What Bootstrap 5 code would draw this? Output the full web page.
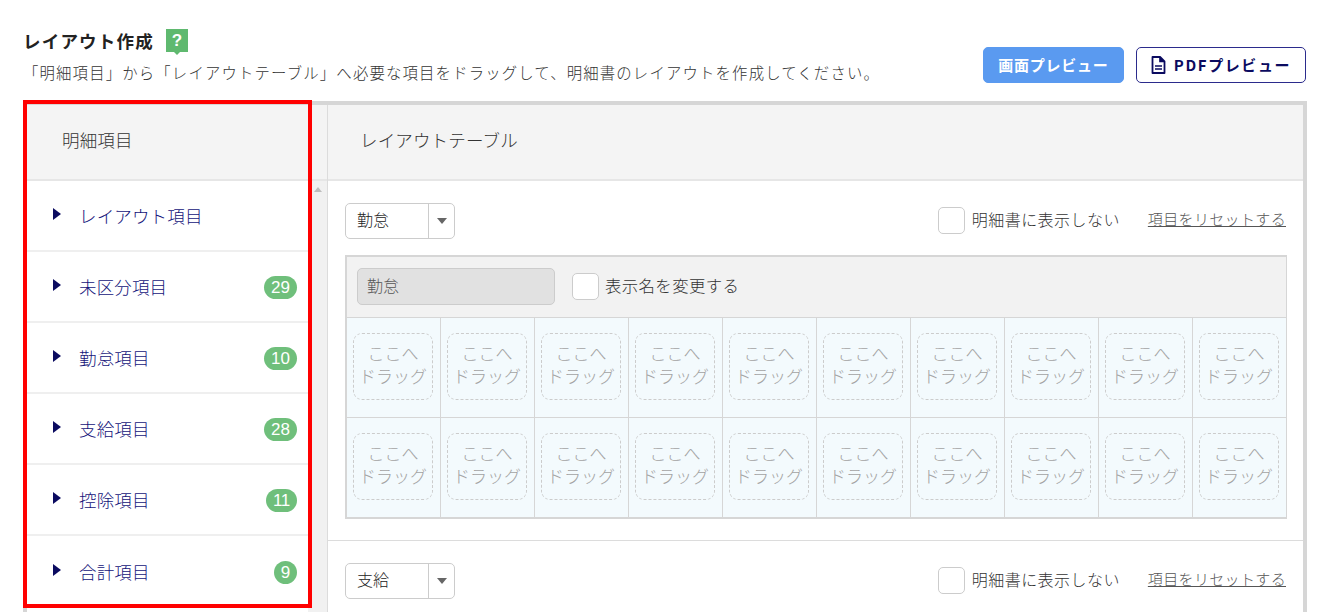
<!DOCTYPE html>
<html lang="ja">
<head>
<meta charset="utf-8">
<title>レイアウト作成</title>
<link rel="stylesheet" href="https://cdn.jsdelivr.net/npm/bootstrap@5.3.0/dist/css/bootstrap.min.css">
<style>
html,body{height:612px;overflow:hidden;background:#fff}
body{font-family:"Noto Sans CJK JP","Liberation Sans",sans-serif;color:#333;font-size:16px;font-weight:300;line-height:1.5;position:relative}
.pg-head{height:101px;padding:29px 24px 0 23px}
.pg-title{font-size:17.5px;font-weight:700;color:#222;letter-spacing:1.2px;line-height:23px;margin:0}
.help-tag{width:22px;height:23px;background:#5fb96f;color:#fff;font:700 17px/23px "Liberation Sans",sans-serif;text-align:center;position:relative;margin-left:12px;display:block}
.help-tag::after{content:"";position:absolute;left:8px;bottom:-3px;border:3px solid transparent;border-top-color:#5fb96f;border-bottom:0}
.pg-desc{font-size:15.4px;letter-spacing:1.15px;line-height:22px;margin:0;color:#333;white-space:nowrap;padding-top:9px}
.btn-prev{height:36px;border-radius:5px;font-size:15px;font-weight:700;letter-spacing:.75px;padding:0;display:flex;align-items:center;justify-content:center;white-space:nowrap}
.btn-img{width:141px;background:#5a9af0;border:1px solid #5a9af0;color:#fff}
.btn-pdf{width:170px;background:#fff;border:1px solid #2b2b8c;color:#0b0b60;gap:8px;margin-left:12px;letter-spacing:1.6px}
.frame{margin-left:23px;width:1284px;height:520px;border:4px solid #d6d6d6;border-bottom:0;display:flex;overflow:hidden}
.side{width:281px;flex:none}
.gutter{width:20px;flex:none;background:#f1f1f1;border-right:1px solid #dcdcdc;position:relative}
.gutter::after{content:"";position:absolute;left:6px;top:82px;border:4px solid transparent;border-bottom:5px solid #bdbdbd;border-top:0}
.main{flex:1;min-width:0}
.pane-h{height:76px;background:#f4f4f4;border-bottom:2px solid #e6e6e6;display:flex;align-items:center;font-size:17.5px;letter-spacing:.15px;padding-bottom:4px;color:#333}
.side .pane-h{padding-left:35px}
.main .pane-h{padding-left:32px}
.gutter-h{height:76px;background:#f4f4f4;border-bottom:2px solid #e6e6e6}
.side-item{height:71px;border-bottom:2px solid #efefef;display:flex;align-items:center;padding:1px 11px 0 26px;color:#14147a;font-size:17.5px;letter-spacing:.15px}
.side-item:last-child{border-bottom:0}
.tri{width:0;height:0;border-left:8px solid #0b0b60;border-top:6.5px solid transparent;border-bottom:6.5px solid transparent;margin-right:18px;position:relative;top:-2px}
.cnt{margin-left:auto;background:#6fbf7b;color:#fff;font:400 17px/23px "Liberation Sans",sans-serif;height:23px;min-width:23px;padding:0 7px;border-radius:12px;text-align:center;letter-spacing:0}
.cnt.one{padding:0}
.cnt.ones{letter-spacing:-.3px;padding:0 7px 0 7px}
.sect{padding:22px 17px 0 17px}
.sect-b{height:360px;border-bottom:1px solid #dcdcdc}
.sel{width:110px;height:36px;border:1px solid #ccc;border-radius:5px;display:flex;color:#222;font-size:16px;background:#fff}
.sel-v{flex:1;padding-left:11px;line-height:31px;border-right:1px solid #ccc}
.sel-c{width:25px;display:flex;align-items:center;justify-content:center}
.sel-c::after{content:"";border:5px solid transparent;border-top:6px solid #666;border-bottom:0}
.chk{width:27px;height:27px;border:1px solid #ccc;border-radius:5px;background:#fff;flex:none;display:block}
.opt-row{margin-top:-2px}
.opt-t{font-size:16px;letter-spacing:.45px;margin-left:7px;white-space:nowrap;position:relative;top:-1px}
.opt-l{font-size:16.4px;letter-spacing:.4px;margin-left:6px;top:-1px}
.reset{font-size:15px;letter-spacing:.35px;color:#555;text-decoration:underline;margin-left:28px;white-space:nowrap;position:relative;top:-1px}
.tbl{margin-top:16px;width:942px;border:2px solid #d6d6d6;border-right-width:1px}
.tbl-h{height:60px;background:#f2f2f2;padding:0 10px 1px;gap:17px;display:flex;align-items:center}
.name-in{width:198px;height:37px;background:#e1e1e1;border:1px solid #ccc;border-radius:5px;padding-left:9px;line-height:33px;font-size:16px;color:#555}
.tbl-grid{display:grid;grid-template-columns:93px repeat(9,94px);background:#f3fafd}
.cellx{height:100px;border-top:1px solid #d6d6d6;border-left:1px solid #d6d6d6;padding:15px 7px 0 6px;background:#f3fafd}
.cellx:nth-child(10n+1){border-left:0}
.drop{height:67px;border:1px dashed #ccc;border-radius:9px;font-size:17px;line-height:23px;color:#a3a3a3;text-align:center;padding-top:7px;white-space:nowrap}
.redbox{position:absolute;left:23px;top:100px;width:289px;height:508px;border:4px solid #f00;pointer-events:none}
</style>
</head>
<body>
<div class="pg-head d-flex justify-content-between">
  <div>
    <div class="d-flex align-items-center">
      <h1 class="pg-title">レイアウト作成</h1>
      <span class="help-tag">?</span>
    </div>
    <p class="pg-desc">「明細項目」から「レイアウトテーブル」へ必要な項目をドラッグして、明細書のレイアウトを作成してください。</p>
  </div>
  <div class="d-flex align-items-start" style="margin-top:18px">
    <button type="button" class="btn btn-prev btn-img">画面プレビュー</button>
    <button type="button" class="btn btn-prev btn-pdf">
      <svg width="15" height="18" viewBox="0 0 15 18" aria-hidden="true"><path d="M1.5 1h7.6L13.5 5.4V17H1.5z" fill="none" stroke="#0b0b60" stroke-width="1.8" stroke-linejoin="round"/><path d="M8.8 1v4.6h4.7" fill="#0b0b60" stroke="#0b0b60" stroke-width="1.2"/><path d="M4 10h7M4 13h7" stroke="#0b0b60" stroke-width="1.5"/></svg>
      PDFプレビュー
    </button>
  </div>
</div>
<div class="frame">
  <div class="side">
    <div class="pane-h">明細項目</div>
    <div class="side-item"><span class="tri"></span>レイアウト項目</div>
    <div class="side-item"><span class="tri"></span>未区分項目<span class="cnt">29</span></div>
    <div class="side-item"><span class="tri"></span>勤怠項目<span class="cnt">10</span></div>
    <div class="side-item"><span class="tri"></span>支給項目<span class="cnt">28</span></div>
    <div class="side-item"><span class="tri"></span>控除項目<span class="cnt ones">11</span></div>
    <div class="side-item"><span class="tri"></span>合計項目<span class="cnt one">9</span></div>
  </div>
  <div class="gutter"><div class="gutter-h"></div></div>
  <div class="main">
    <div class="pane-h">レイアウトテーブル</div>
    <div class="sect sect-b">
      <div class="d-flex align-items-center justify-content-between">
        <div class="sel"><span class="sel-v">勤怠</span><span class="sel-c"></span></div>
        <div class="d-flex align-items-center opt-row"><span class="chk"></span><span class="opt-t">明細書に表示しない</span><a class="reset" href="#">項目をリセットする</a></div>
      </div>
      <div class="tbl">
        <div class="tbl-h"><div class="name-in">勤怠</div><div class="d-flex align-items-center"><span class="chk"></span><span class="opt-t opt-l">表示名を変更する</span></div></div>
        <div class="tbl-grid" id="g"></div>
      </div>
    </div>
    <div class="sect">
      <div class="d-flex align-items-center justify-content-between">
        <div class="sel"><span class="sel-v">支給</span><span class="sel-c"></span></div>
        <div class="d-flex align-items-center opt-row"><span class="chk"></span><span class="opt-t">明細書に表示しない</span><a class="reset" href="#">項目をリセットする</a></div>
      </div>
    </div>
  </div>
</div>
<div class="redbox"></div>
<script>
var g=document.getElementById('g'),h='';
for(var i=0;i<20;i++){h+='<div class="cellx"><div class="drop">ここへ<br>ドラッグ</div></div>';}
g.innerHTML=h;
</script>
<script src="https://cdn.jsdelivr.net/npm/bootstrap@5.3.0/dist/js/bootstrap.bundle.min.js"></script>
</body>
</html>
